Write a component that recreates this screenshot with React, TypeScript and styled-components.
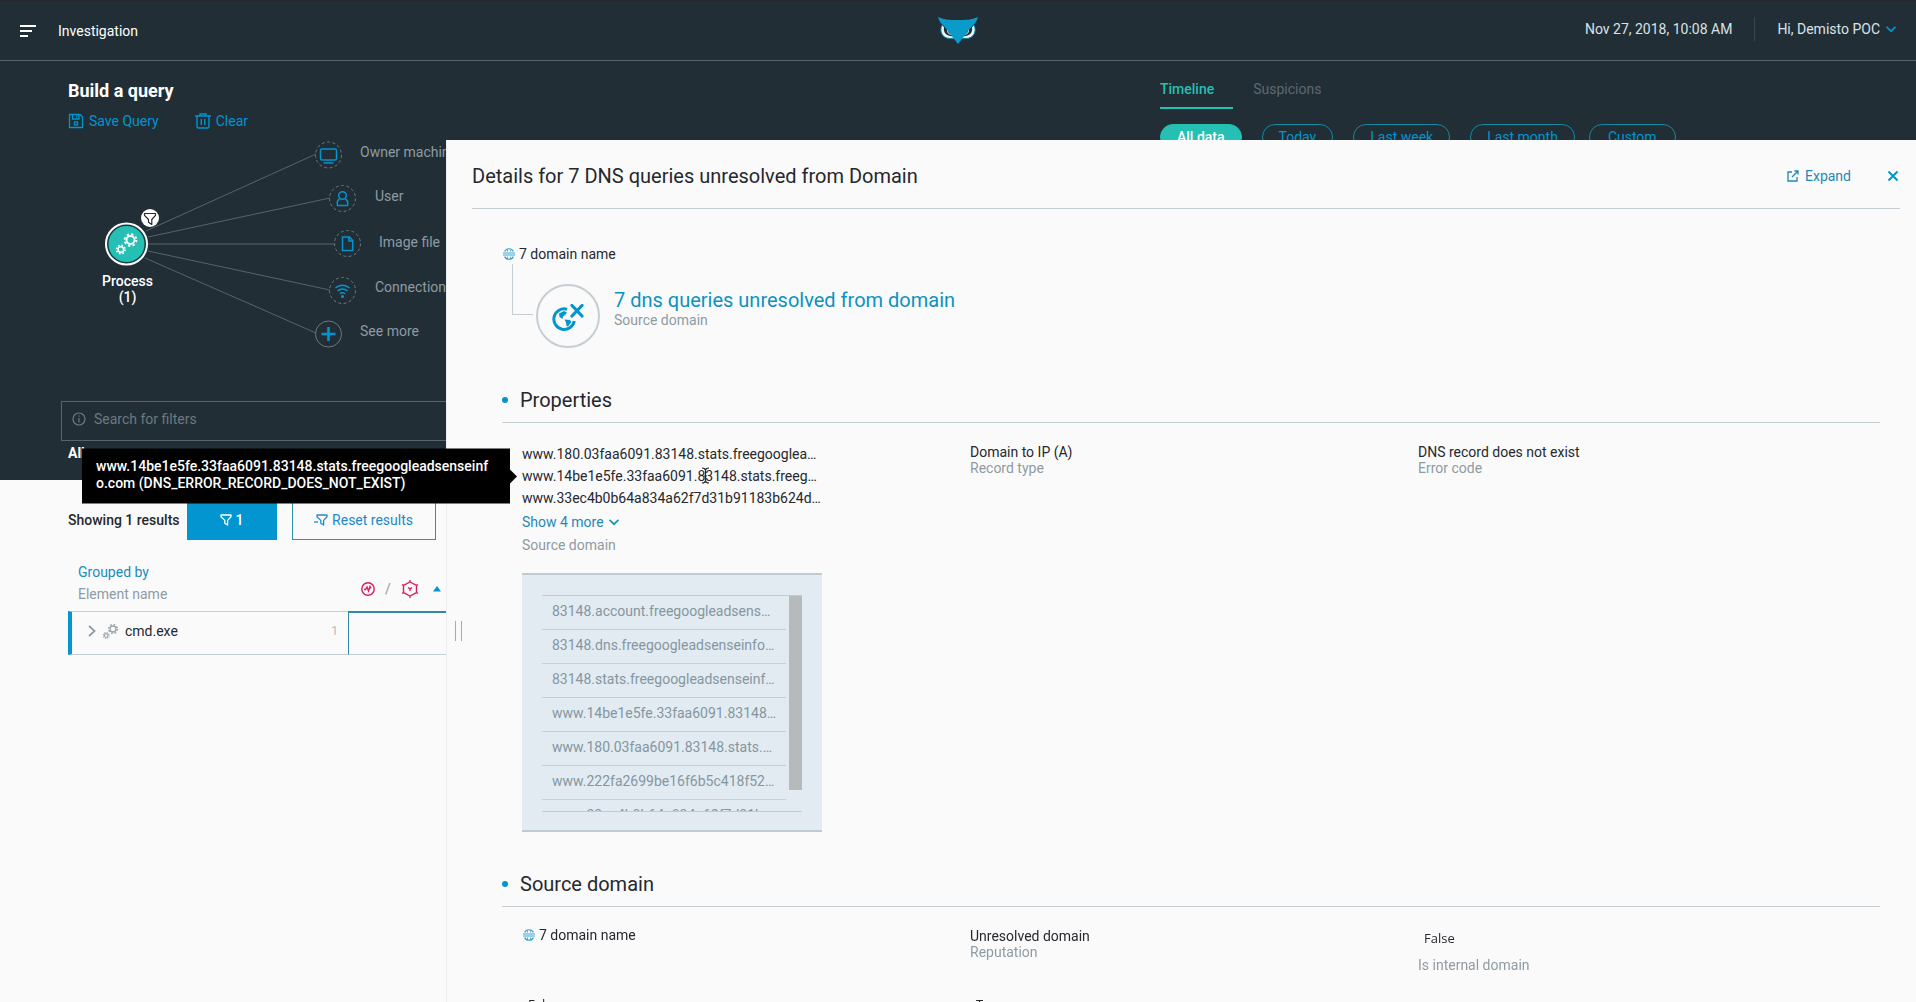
import React from "react";
import styled, { createGlobalStyle } from "styled-components";

const c = {
  dark: "#212e36",
  light: "#fafafb",
  blue: "#0295cf",
  teal: "#26bfb3",
  ink: "#25282d",
  grey: "#8f9ba2",
  rule: "#c5cfd3",
  line: "#56646b",
};

const Global = createGlobalStyle`
  *, *::before, *::after { box-sizing: border-box; }
  html, body { margin: 0; height: 100%; overflow: hidden; }
  body { font: 400 14px/16px Roboto, "Noto Sans", sans-serif; background: ${c.light}; color: ${c.ink}; }
  button, input { font: inherit; color: inherit; }
  h1, h2, h3, p, ul { margin: 0; padding: 0; font-weight: 400; }
  svg { display: block; flex: none; }
`;

const Page = styled.div`
  min-height: 100vh;
`;

/* ---------- top bar ---------- */

const TopBar = styled.header`
  display: grid;
  grid-template-columns: 1fr auto 1fr;
  align-items: center;
  height: 61px;
  padding: 0 20px;
  background: ${c.dark};
  border-top: 1px solid #25282d;
  border-bottom: 1px solid ${c.line};
  color: #fff;
`;

const BarSide = styled.div<{ $end?: boolean }>`
  display: flex;
  align-items: center;
  justify-content: ${(p) => (p.$end ? "flex-end" : "flex-start")};
  gap: 22px;
  padding-bottom: ${(p) => (p.$end ? 3 : 0)}px;
  color: ${(p) => (p.$end ? "#dbe2e6" : "#fff")};
`;

const Divider = styled.span`
  width: 1px;
  height: 24px;
  background: #37454d;
`;

const PlainButton = styled.button<{ $color?: string; $gap?: number }>`
  display: inline-flex;
  align-items: center;
  gap: ${(p) => p.$gap ?? 6}px;
  padding: 0;
  border: 0;
  background: none;
  color: ${(p) => p.$color ?? c.blue};
  line-height: 20px;
  cursor: pointer;
`;

/* ---------- query builder ---------- */

const Query = styled.section`
  height: 419px;
  background: ${c.dark};
  color: #fff;
`;

const QueryTop = styled.div`
  display: grid;
  grid-template-columns: 13fr 9fr;
  height: 340px;
  padding: 18px 0 0 68px;
`;

const QueryTitle = styled.h1`
  font-size: 18px;
  line-height: 24px;
  font-weight: 700;
`;

const Actions = styled.div`
  display: flex;
  gap: 36px;
  margin-top: 8px;
`;

const Canvas = styled.div`
  position: relative;
  height: 240px;
`;

const CanvasDrawing = styled.svg`
  position: absolute;
  left: 0;
  top: 0;
`;

const NodeLabel = styled.span<{ $x: number; $y: number }>`
  position: absolute;
  left: ${(p) => p.$x}px;
  top: ${(p) => p.$y}px;
  color: ${c.grey};
  white-space: nowrap;
`;

const ProcessLabel = styled.strong`
  position: absolute;
  left: 34px;
  top: 142px;
  width: 51px;
  font-weight: 500;
  text-align: center;
`;

const Tabs = styled.div`
  display: flex;
  gap: 20px;
`;

const Tab = styled.button<{ $active?: boolean }>`
  padding: 0 19px 8px 0;
  border: 0;
  border-bottom: 2px solid ${(p) => (p.$active ? c.teal : "transparent")};
  background: none;
  color: ${(p) => (p.$active ? c.teal : "#5c6970")};
  font-weight: ${(p) => (p.$active ? 500 : 400)};
  line-height: 20px;
`;

const Ranges = styled.div<{ $gap: number }>`
  display: flex;
  gap: ${(p) => p.$gap}px;
`;

const RangeRow = styled(Ranges)`
  margin-top: 15px;
`;

const Pill = styled.button<{ $active?: boolean; $pad?: number }>`
  height: 26px;
  padding: 0 ${(p) => p.$pad ?? 16}px;
  border: 1px solid ${(p) => (p.$active ? c.teal : "#1588a4")};
  border-radius: 13px;
  background: ${(p) => (p.$active ? c.teal : "transparent")};
  color: ${(p) => (p.$active ? "#fff" : c.blue)};
  font-weight: ${(p) => (p.$active ? 500 : 400)};
`;

const Search = styled.label`
  display: flex;
  align-items: center;
  gap: 8px;
  height: 40px;
  margin-left: 61px;
  padding: 0 0 4px 10px;
  border: 1px solid ${c.line};
  color: #6d7980;
`;

const SearchInput = styled.input`
  flex: 1;
  padding: 0;
  border: 0;
  outline: 0;
  background: none;
  &::placeholder { color: #6d7980; opacity: 1; }
`;

const Scope = styled.p`
  padding: 4px 0 0 68px;
  font-weight: 700;
`;

/* ---------- results ---------- */

const Results = styled.section`
  padding: 20px 0 0 68px;
`;

const ResultBar = styled.div`
  display: flex;
  align-items: center;
  gap: 15px;
`;

const ResultCount = styled.div`
  display: flex;
  align-items: center;
  gap: 7px;
  font-weight: 500;
`;

const BoxButton = styled.button<{ $filled?: boolean; $width: number }>`
  display: flex;
  align-items: center;
  justify-content: center;
  gap: 4px;
  width: ${(p) => p.$width}px;
  height: 40px;
  border: 1px solid ${(p) => (p.$filled ? c.blue : "#2c93a8")};
  background: ${(p) => (p.$filled ? c.blue : "transparent")};
  color: ${(p) => (p.$filled ? "#fff" : "#2089c9")};
  font-weight: ${(p) => (p.$filled ? 500 : 400)};
`;

const Table = styled.table`
  width: 100%;
  margin-top: 20px;
  table-layout: fixed;
  border-collapse: separate;
  border-spacing: 0;
`;

const HeadCell = styled.th<{ $width?: number }>`
  width: ${(p) => (p.$width ? p.$width + "px" : "auto")};
  height: 51px;
  padding: 1px 0 5px 10px;
  vertical-align: top;
  text-align: left;
  font-weight: 400;
  line-height: 22px;
  color: ${c.grey};
`;

const GroupLink = styled.a`
  display: block;
  color: #1b8cb9;
  text-decoration: none;
`;

const HeadIcons = styled.div`
  display: flex;
  align-items: center;
  gap: 10px;
  padding: 17px 0 0 3px;
`;

const NameCell = styled.td`
  height: 44px;
  padding: 0 10px 4px 16px;
  border: solid ${c.rule};
  border-width: 1px 0 1px 4px;
  border-left-color: ${c.blue};
`;

const NameRow = styled.div`
  display: flex;
  align-items: center;
  gap: 7px;
`;

const Count = styled.span`
  margin-left: auto;
  color: #b3bbbf;
  font-size: 12px;
`;

const SelectedCell = styled.td`
  border: solid #3288a8;
  border-width: 2px 0 0 1px;
  border-bottom: 1px solid ${c.rule};
`;

/* ---------- details drawer ---------- */

const Drawer = styled.aside`
  position: fixed;
  top: 140px;
  right: 0;
  bottom: 0;
  left: 446px;
  padding: 0 16px 0 25px;
  background: ${c.light};
  border-left: 1px solid #eceff1;
`;

const DrawerHead = styled.div`
  display: flex;
  align-items: center;
  gap: 36px;
  padding: 24px 0 20px;
  border-bottom: 1px solid ${c.rule};
`;

const DrawerTitle = styled.h2`
  flex: 1;
  padding-top: 1px;
  font-size: 20px;
  line-height: 23px;
`;

const DrawerBody = styled.div`
  padding: 37px 20px 0 30px;
`;

const Grip = styled.span`
  position: absolute;
  left: 8px;
  top: 481px;
  width: 7px;
  height: 20px;
  border: solid #a5adb2;
  border-width: 0 1px;
`;

const Domain = styled.div`
  display: flex;
  align-items: center;
  align-self: start;
  gap: 4px;
  padding-left: 1px;
`;

const Branch = styled.div`
  display: flex;
  margin: 2px 0 0 10px;
`;

const Elbow = styled.span`
  width: 21px;
  height: 51px;
  margin-right: 3px;
  border: solid ${c.rule};
  border-width: 0 0 1px 1px;
`;

const Medallion = styled.span`
  display: grid;
  place-items: center;
  width: 64px;
  height: 64px;
  margin: 20px 14px 0 0;
  padding-top: 4px;
  border: 2px solid ${c.rule};
  border-radius: 50%;
`;

const BranchText = styled.div`
  padding-top: 24px;
`;

const BigLink = styled.a`
  display: block;
  font-size: 20px;
  line-height: 24px;
  color: #0c93bd;
  text-decoration: none;
`;

const Label = styled.div<{ $top?: number }>`
  margin-top: ${(p) => p.$top ?? 0}px;
  color: ${c.grey};
`;

const SectionTitle = styled.h3`
  display: flex;
  align-items: center;
  gap: 12px;
  margin-top: 40px;
  padding-bottom: 10px;
  border-bottom: 1px solid ${c.rule};
  font-size: 20px;
  line-height: 24px;
  &::before {
    content: "";
    width: 6px;
    height: 6px;
    border-radius: 50%;
    background: ${c.blue};
  }
`;

const Fields = styled.div`
  display: grid;
  grid-template-columns: repeat(3, 1fr);
  row-gap: 20px;
  padding: 20px 14px 0 20px;
`;

const Pair = styled.div`
  padding-top: 1px;
`;

const Flag = styled.div`
  padding-left: 6px;
  font-family: "Open Sans", sans-serif;
  font-size: 13px;
  line-height: 22px;
`;

const Value = styled.div`
  position: relative;
  width: 300px;
  line-height: 22px;
  white-space: nowrap;
`;

const Tooltip = styled.div`
  position: absolute;
  right: calc(100% + 12px);
  top: 50%;
  z-index: 1;
  width: 428px;
  padding: 9px 14px 12px;
  transform: translateY(-50%);
  background: #000;
  color: #fff;
  font-weight: 500;
  line-height: 17px;
  white-space: normal;
  word-break: break-all;
  &::after {
    content: "";
    position: absolute;
    left: 100%;
    top: 50%;
    margin-top: -7px;
    border: 7px solid transparent;
    border-left-color: #000;
    border-right-width: 0;
  }
`;

const Caret = styled.svg`
  position: absolute;
  left: 179px;
  top: 2px;
`;

const ListBox = styled.div`
  width: 300px;
  margin-top: 20px;
  padding: 20px 20px 18px;
  border: solid #bdccd3;
  border-width: 2px 0;
  background: #e2ebf1;
`;

const ListFrame = styled.div`
  display: flex;
  justify-content: space-between;
  height: 217px;
  overflow: hidden;
  border: solid #bdccd3;
  border-width: 1px 0;
`;

const List = styled.ul`
  width: 244px;
  list-style: none;
`;

const ListItem = styled.li`
  padding: 5px 10px 8px;
  border-bottom: 1px solid #c3d0d5;
  color: #8596a0;
  line-height: 20px;
  white-space: nowrap;
`;

const Thumb = styled.span`
  width: 13px;
  height: 194px;
  background: #b7babb;
`;

/* ---------- icons ---------- */

const gearTeeth = (r: number) => (2 * Math.PI * r) / 16;

const Gear = ({ x, y, r, w }: { x: number; y: number; r: number; w: number }) => (
  <g>
    <circle cx={x} cy={y} r={r} strokeWidth={w} />
    <circle cx={x} cy={y} r={r + w} strokeWidth={w} strokeDasharray={gearTeeth(r + w)} />
  </g>
);

const Gears = () => (
  <svg width="15" height="15" viewBox="0 0 15 15" fill="none" stroke="#9aa4aa">
    <Gear x={10} y={5} r={3} w={1.4} />
    <Gear x={3.2} y={11.4} r={1.8} w={1.1} />
  </svg>
);

const Funnel = ({ size = 12, dash }: { size?: number; dash?: boolean }) => (
  <svg width={dash ? size + 2 : size} height={size} viewBox={dash ? "-2 0 14 12" : "0 0 12 12"} fill="none" stroke="currentColor" strokeWidth="1.3" strokeLinejoin="round">
    <path d="M1 1h10v1.8L7.6 6.4V11L4.8 9.2V6.4L1 2.8z" />
    {dash && <path d="M-2 8h4" />}
  </svg>
);

const Chevron = ({ color = c.blue, side }: { color?: string; side?: boolean }) => (
  <svg width={side ? 8 : 10} height={side ? 12 : 10} viewBox={side ? "0 0 8 12" : "0 0 10 10"} fill="none" stroke={color} strokeWidth="1.7">
    <path d={side ? "M1 1l5.6 5L1 11" : "M.5 2.8L5 7.2l4.5-4.4"} />
  </svg>
);

const Globe = () => (
  <svg width="12" height="12" viewBox="0 0 12 12" fill="none" stroke="#2f9ec9">
    <path d="M1.600 3.400a5 5 0 0 1 8.800 0M1.600 8.600a5 5 0 0 0 8.800 0" strokeWidth="1.200" />
    <path d="M4.500 1.500v2M7.500 1.500v2M4.500 8.500v2M7.500 8.500v2" strokeWidth=".8" />
    <path d="M0 5h12M0 7h12" strokeWidth=".9" />
  </svg>
);

const Owl = () => (
  <svg width="40" height="27" viewBox="0 0 40 27">
    <g fill="#e6f6fb" stroke="#0d7fa5" strokeWidth="1">
      <path d="M4 8C1 14 4 21.500 12 21.500c3 0 5-.5 6-1z" />
      <path d="M36 8c3 6 0 13.500-8 13.500-3 0-5-.5-6-1z" />
    </g>
    <g fill={c.dark}>
      <path d="M6.500 9C4.500 14 7 19.500 15.500 19.200z" />
      <path d="M33.500 9c2 5-.5 10.500-9 10.200z" />
    </g>
    <g fill="none" stroke="#e6f6fb" strokeWidth="1">
      <path d="M9.500 12.500c-.5 3 1 4.500 4 5" />
      <path d="M30.500 12.500c.5 3-1 4.500-4 5" />
    </g>
    <path d="M0 0c7 3 12 3 20 3s13 0 20-3c-1 4-3 7-6 9L20 27 6 9C3 7 1 4 0 0z" fill="#0b9bca" />
  </svg>
);

const edges = [
  [78, 100, 248, 23],
  [80, 106, 262, 67],
  [80, 113, 267, 113],
  [80, 120, 262, 159],
  [77, 127, 248, 202],
];

const nodes = [
  { label: "Owner machine", x: 260.5, y: 24, lx: 292, ly: 13 },
  { label: "User", x: 274.5, y: 67.5, lx: 307, ly: 57 },
  { label: "Image file", x: 279.5, y: 112.5, lx: 311, ly: 103 },
  { label: "Connection", x: 274.5, y: 159.5, lx: 307, ly: 148 },
  { label: "See more", x: 260.5, y: 203, lx: 292, ly: 192 },
];

const glyphs = [
  <g key="m"><rect x="-8" y="-6" width="16" height="11" rx="1.5" /><path d="M-5 8h10" /></g>,
  <g key="u"><circle cy="-3" r="3.800" /><path d="M-3 .5C-5.500 2-5.500 5-5 7H5c.5-2 .5-5-2-6.500" /></g>,
  <path key="f" d="M-5-6.500H2L5.200-3V7H-5zM1.500-6.500V-2.500H5" />,
  <g key="c"><path d="M-7-2.500a10 10 0 0 1 14 0M-5 .6a7 7 0 0 1 10 0M-2.600 3.300a4 4 0 0 1 5.200 0" /><circle cy="6" r=".8" fill={c.blue} /></g>,
  <path key="s" d="M-7 0H7M0-7V7" strokeWidth="2.600" />,
];

const domains = [
  "83148.account.freegoogleadsens…",
  "83148.dns.freegoogleadsenseinfo…",
  "83148.stats.freegoogleadsenseinf…",
  "www.14be1e5fe.33faa6091.83148…",
  "www.180.03faa6091.83148.stats.…",
  "www.222fa2699be16f6b5c418f52…",
  "www.33ec4b0b64a834a62f7d31b…",
];

const DomainName = () => (
  <Domain>
    <Globe />
    7 domain name
  </Domain>
);

export default function App() {
  return (
    <Page>
      <Global />
      <TopBar>
        <BarSide>
          <PlainButton aria-label="Menu" $color="#fff">
            <svg width="16" height="12" viewBox="0 0 16 12" fill="currentColor">
              <path d="M0 0h16v2H0zM0 5h12v2H0zM0 10h8v2H0z" />
            </svg>
          </PlainButton>
          Investigation
        </BarSide>
        <Owl />
        <BarSide $end>
          <span>Nov 27, 2018, 10:08 AM</span>
          <Divider />
          <PlainButton $color="#dbe2e6">
            Hi, Demisto POC
            <Chevron />
          </PlainButton>
        </BarSide>
      </TopBar>

      <Query>
        <QueryTop>
          <div>
            <QueryTitle>Build a query</QueryTitle>
            <Actions>
              <PlainButton $gap={5}>
                <svg width="16" height="16" viewBox="0 0 16 16" fill="none" stroke="currentColor" strokeWidth="1.300">
                  <path d="M1.500 1.500h10.500L14.500 4v10.500h-13zM4.500 1.500v4.500h6.500v-4.500M8.500 2.500v2" />
                  <rect x="6.500" y="9" width="3" height="3" />
                </svg>
                Save Query
              </PlainButton>
              <PlainButton $gap={5}>
                <svg width="16" height="16" viewBox="0 0 16 16" fill="none" stroke="currentColor" strokeWidth="1.400">
                  <path d="M0 3h16M5 3V1h6v2M2 3v10.500q0 1.500 1.500 1.500h9q1.500 0 1.500-1.500V3M6.300 6v6M9.700 6v6" />
                </svg>
                Clear
              </PlainButton>
            </Actions>
            <Canvas>
              <CanvasDrawing width="340" height="240" viewBox="0 0 340 240" fill="none">
                {edges.map(([x1, y1, x2, y2]) => (
                  <line key={y2} x1={x1} y1={y1} x2={x2} y2={y2} stroke={c.line} />
                ))}
                {nodes.map((n, i) => (
                  <g key={n.label} transform={`translate(${n.x} ${n.y})`} stroke={c.blue} strokeWidth="1.500">
                    <circle r="13" stroke="#6b787f" strokeWidth="1" strokeDasharray={i < 4 ? "3 2.400" : undefined} />
                    {glyphs[i]}
                  </g>
                ))}
                <circle cx="58.500" cy="113" r="20.500" fill="#123e47" stroke="#fff" strokeWidth="2" />
                <circle cx="58.500" cy="113" r="18" fill={c.teal} />
                <g stroke="#fff">
                  <Gear x={62.5} y={109} r={4} w={1.9} />
                  <Gear x={52.8} y={118.5} r={2.8} w={1.5} />
                </g>
                <circle cx="82" cy="87" r="9" fill="#fff" />
                <path d="M76.500 82.500h11v1.800L83.800 88.500v5L80.500 91.300v-2.800L76.500 84.300z" stroke="#25282d" strokeWidth="1.200" strokeLinejoin="round" />
              </CanvasDrawing>
              {nodes.map((n) => (
                <NodeLabel key={n.label} $x={n.lx} $y={n.ly}>{n.label}</NodeLabel>
              ))}
              <ProcessLabel>Process (1)</ProcessLabel>
            </Canvas>
          </div>
          <div>
            <Tabs>
              <Tab $active>Timeline</Tab>
              <Tab>Suspicions</Tab>
            </Tabs>
            <RangeRow $gap={14}>
              <Ranges $gap={20}>
                <Pill $active>All data</Pill>
                <Pill>Today</Pill>
                <Pill>Last week</Pill>
                <Pill>Last month</Pill>
              </Ranges>
              <Pill $pad={18}>Custom</Pill>
            </RangeRow>
          </div>
        </QueryTop>
        <Search>
          <svg width="14" height="14" viewBox="0 0 14 14" fill="none" stroke="currentColor" strokeWidth="1.200">
            <circle cx="7" cy="7" r="6" />
            <path d="M7 6v4.500M7 3.500v1.300" />
          </svg>
          <SearchInput aria-label="Search for filters" placeholder="Search for filters" />
        </Search>
        <Scope>All</Scope>
      </Query>

      <Results>
        <ResultBar>
          <ResultCount>
            Showing 1 results
            <BoxButton $filled $width={90}>
              <Funnel />1
            </BoxButton>
          </ResultCount>
          <BoxButton $width={144}>
            <Funnel dash />
            Reset results
          </BoxButton>
        </ResultBar>
        <Table>
          <thead>
            <tr>
              <HeadCell $width={280}>
                <GroupLink href="#">Grouped by</GroupLink>
                Element name
              </HeadCell>
              <HeadCell>
                <HeadIcons>
                  <svg width="14" height="14" viewBox="0 0 14 14" fill="none" stroke="#d81e5b" strokeWidth="1.400">
                    <circle cx="7" cy="7" r="6.200" />
                    <path d="M3 7.500h1.500L6 5l1.500 4 1.500-4.500 1 2" />
                  </svg>
                  /
                  <svg width="18" height="18" viewBox="0 0 18 18" fill="none" stroke="#d81e5b" strokeWidth="1.400">
                    <path d="M9 2l6.500 3.500v7L9 16l-6.500-3.500v-7zM9 0v2M9 16v2M1 4.500l1.500 1M17 4.500l-1.500 1M1 13.500l1.500-1M17 13.500l-1.500-1M7 7.500l2 1.300 2-1.300M9 8.800V11" />
                  </svg>
                  <svg width="14" height="6" viewBox="-4 0 14 6" fill={c.blue}>
                    <path d="M0 5.500L4 0l4 5.500z" />
                  </svg>
                </HeadIcons>
              </HeadCell>
            </tr>
          </thead>
          <tbody>
            <tr>
              <NameCell>
                <NameRow>
                  <Chevron side color="#8f9ba2" />
                  <Gears />
                  cmd.exe
                  <Count>1</Count>
                </NameRow>
              </NameCell>
              <SelectedCell />
            </tr>
          </tbody>
        </Table>
      </Results>

      <Drawer>
        <Grip />
        <DrawerHead>
          <DrawerTitle>Details for 7 DNS queries unresolved from Domain</DrawerTitle>
          <PlainButton $color="#1f88b6">
            <svg width="12" height="12" viewBox="0 0 12 12" fill="none" stroke="currentColor" strokeWidth="1.300">
              <path d="M5 2H1v9h9V7M5 7l5.500-5.500M7.500 1H11v3.500" />
            </svg>
            Expand
          </PlainButton>
          <PlainButton aria-label="Close">
            <svg width="13" height="12" viewBox="0 0 13 12" stroke="currentColor" strokeWidth="2">
              <path d="M1.500 1.500l9 9M10.500 1.500l-9 9" />
            </svg>
          </PlainButton>
        </DrawerHead>
        <DrawerBody>
          <DomainName />
          <Branch>
            <Elbow />
            <Medallion>
              <svg width="32" height="28" viewBox="0 0 32 28" fill="none" stroke={c.blue}>
                <path d="M15 5.200A10.300 10.300 0 1 0 22.300 17" strokeWidth="3" />
                <path d="M20 1.500l10 10.500M30 1.500L20 12" strokeWidth="3.200" strokeLinecap="round" />
                <path d="M7 9.500l5-2.500 3 1.500-2 2.500-2 1.500-.5 2.500-3-2zM12.500 15.500l5.500.5 1.500 2-3.500 4.500-1.500-.5-.5-3.500z" fill={c.blue} stroke="none" />
              </svg>
            </Medallion>
            <BranchText>
              <BigLink href="#">7 dns queries unresolved from domain</BigLink>
              <Label>Source domain</Label>
            </BranchText>
          </Branch>

          <SectionTitle>Properties</SectionTitle>
          <Fields>
            <div>
              <Value>www.180.03faa6091.83148.stats.freegooglea…</Value>
              <Value>
                www.14be1e5fe.33faa6091.83148.stats.freeg…
                <Caret width="9" height="17" viewBox="0 0 9 17" fill="none" stroke="#25282d" strokeWidth="1.200">
                  <path d="M1 1q3 0 3.500 2Q5 1 8 1M1 16q3 0 3.500-2Q5 16 8 16M4.500 3v11M3 9h3" />
                </Caret>
                <Tooltip role="tooltip">
                  www.14be1e5fe.33faa6091.83148.stats.freegoogleadsenseinfo.com (DNS_ERROR_RECORD_DOES_NOT_EXIST)
                </Tooltip>
              </Value>
              <Value>www.33ec4b0b64a834a62f7d31b91183b624d…</Value>
              <Label $top={3}>
                <PlainButton $color="#1f88b6" $gap={5}>
                  Show 4 more
                  <Chevron color="#1596b5" />
                </PlainButton>
              </Label>
              <Label $top={5}>Source domain</Label>
              <ListBox>
                <ListFrame>
                  <List>
                    {domains.map((d) => (
                      <ListItem key={d}>{d}</ListItem>
                    ))}
                  </List>
                  <Thumb />
                </ListFrame>
              </ListBox>
            </div>
            <Pair>
              Domain to IP (A)
              <Label>Record type</Label>
            </Pair>
            <Pair>
              DNS record does not exist
              <Label>Error code</Label>
            </Pair>
          </Fields>

          <SectionTitle>Source domain</SectionTitle>
          <Fields>
            <DomainName />
            <Pair>
              Unresolved domain
              <Label>Reputation</Label>
            </Pair>
            <div>
              <Flag>False</Flag>
              <Label $top={8}>Is internal domain</Label>
            </div>
            <Flag>False</Flag>
            <Flag>True</Flag>
          </Fields>
        </DrawerBody>
      </Drawer>
    </Page>
  );
}
